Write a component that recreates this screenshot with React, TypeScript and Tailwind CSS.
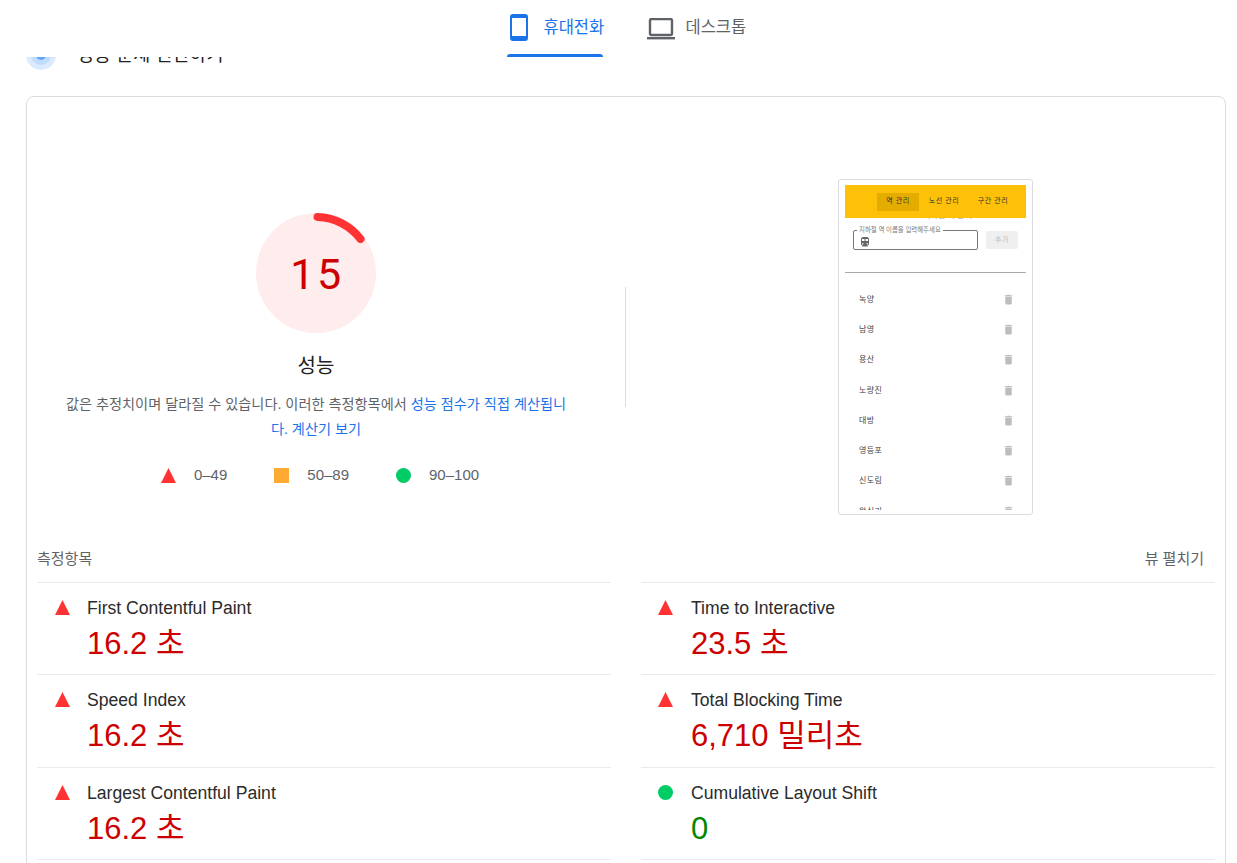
const kr = "font-['Arial','Liberation_Sans','Noto_Sans_CJK_KR',sans-serif]";

const stations = ["녹양", "남영", "용산", "노량진", "대방", "영등포", "신도림", "왕십리"];

function Triangle() {
  return (
    <svg viewBox="0 0 15 15" className="h-[15px] w-[15px]">
      <polygon points="7.5,0 15,15 0,15" fill="#ff3333" />
    </svg>
  );
}

function Metric({ title, value, good, right }: { title: string; value: string; good?: boolean; right?: boolean }) {
  return (
    <div className={`flex h-[92.3px] border-b border-[#e8eaed] pt-[14px] ${right ? "pl-[17px]" : "pl-[18px]"}`}>
      <div className={`pt-[3px] ${right ? "w-[33px]" : "w-[32px]"}`}>
        {good ? <div className="h-[15px] w-[15px] rounded-full bg-[#00cc66]" /> : <Triangle />}
      </div>
      <div>
        <div className="text-[17.6px] leading-[22px] text-[#2b2b2b]">{title}</div>
        <div className={`mt-[5px] text-[31px] leading-[40px] ${good ? "text-[#008800]" : "text-[#cc0000]"}`}>{value}</div>
      </div>
    </div>
  );
}

function Trash() {
  return (
    <svg viewBox="0 0 24 24" className="h-[13px] w-[13px]" fill="#bdbdbd">
      <path d="M6 19c0 1.1.9 2 2 2h8c1.1 0 2-.9 2-2V7H6v12zM19 4h-3.5l-1-1h-5l-1 1H5v2h14V4z" />
    </svg>
  );
}

function PhonePreview() {
  return (
    <div className="ml-[212px] mt-[82px] h-[336px] w-[195px] rounded-[3px] border border-[#dadce0] px-[6px] pt-[5px]">
      <div className="h-[325px] overflow-hidden">
        <div className="flex h-[33px] items-center bg-[#ffc107] pl-[32px] text-[7px] tracking-[0.6px] text-[#333]">
          <div className="flex h-[18px] w-[42px] items-center justify-center rounded-[1px] bg-[#e5ac00]">역 관리</div>
          <div className="flex w-[50px] justify-center whitespace-nowrap">노선 관리</div>
          <div className="flex w-[48px] justify-center whitespace-nowrap">구간 관리</div>
        </div>
        {/* page title hidden behind the yellow bar, only its bottom edge shows */}
        <div className="flex h-[2px] justify-center overflow-hidden pl-[24px] text-[8px] leading-[2px] text-[#999]">
          <span className="-translate-y-[3px]">지하철 역 관리</span>
        </div>
        <div className="flex pl-[8px] pt-[10px]">
          <div className="relative h-[20px] w-[125px] rounded-[2px] border border-[#777]">
            <span className="absolute -top-[5px] left-[3px] whitespace-nowrap bg-white px-[2px] text-[6.4px] leading-[8px] text-[#777]">지하철 역 이름을 입력해주세요</span>
            <svg viewBox="0 0 24 24" className="ml-[5px] mt-[5px] h-[12px] w-[12px]" fill="#666">
              <path d="M12 2c-4 0-8 .5-8 4v9.5C4 17.4 5.6 19 7.5 19L6 20.5v.5h12v-.5L16.500 19c1.900 0 3.500-1.600 3.500-3.500V6c0-3.500-4-4-8-4zM7.500 17a1.500 1.500 0 110-3 1.500 1.500 0 010 3zM11 10H6V6h5v4zm5.500 7a1.500 1.500 0 110-3 1.500 1.500 0 010 3zM18 10h-5V6h5v4z" />
            </svg>
          </div>
          <div className="ml-[8px] mt-[1px] flex h-[18px] w-[32px] items-center justify-center rounded-[2px] bg-[#efefef] text-[7px] tracking-[0.5px] text-[#bbb]">추가</div>
        </div>
        <div className="mt-[22px] h-px bg-[#aaa]" />
        <div className="pt-[11px]">
          {stations.map((name) => (
            <div key={name} className="flex h-[30.3px] items-center justify-between pl-[14px] pr-[11px] text-[8px] tracking-[0.4px] text-[#444]">
              <span className="pt-[1px]">{name}</span>
              <Trash />
            </div>
          ))}
        </div>
      </div>
    </div>
  );
}

function Gauge() {
  return (
    <svg viewBox="0 0 120 120" className="h-[120px] w-[120px]">
      <circle cx="60" cy="60" r="60" fill="#ffecec" />
      <path d="M 61.500 4 A 56 56 0 0 1 104.500 26" fill="none" stroke="#ff3333" strokeWidth="8" strokeLinecap="round" />
      <text x="61" y="76" textAnchor="middle" fontSize="43" letterSpacing="2.500" fill="#cc0000" fontFamily="Roboto, sans-serif">15</text>
    </svg>
  );
}

export default function App() {
  return (
    <div className={`relative h-[863px] w-[1237px] overflow-hidden bg-white ${kr}`}>
      {/* sticky tab bar */}
      <div className="absolute left-0 top-0 z-10 flex h-[57px] w-full justify-center bg-white pl-[16px]">
        <div className="flex h-[57px] w-[96px] flex-col items-center justify-between">
          <div className="flex h-[54px] w-full items-start pl-[1px] pt-[14px]">
            <svg viewBox="0 0 18 27" className="ml-[2px] h-[27px] w-[18px] shrink-0">
              <rect x="1" y="1" width="16" height="25" rx="2" fill="none" stroke="#1a73e8" strokeWidth="2" />
              <rect x="1" y="1" width="16" height="3" fill="#1a73e8" />
              <rect x="1" y="22" width="16" height="4" fill="#1a73e8" />
            </svg>
            <span className="ml-[16px] mt-[2px] whitespace-nowrap text-[16.5px] leading-[22px] text-[#1a73e8]">휴대전화</span>
          </div>
          <div className="h-[3px] w-full rounded-t-[3px] bg-[#1a73e8]" />
        </div>
        <div className="ml-[44px] flex h-[54px] w-[100px] items-start pt-[16px]">
          <svg viewBox="0 0 28 22" className="mt-[2px] h-[22px] w-[28px] shrink-0">
            <rect x="3" y="1" width="22" height="16" rx="1.500" fill="none" stroke="#5f6368" strokeWidth="2.400" />
            <rect x="0" y="19" width="28" height="2.400" fill="#5f6368" />
          </svg>
          <span className="ml-[11px] whitespace-nowrap text-[16.5px] leading-[22px] text-[#5f6368]">데스크톱</span>
        </div>
      </div>

      <div className="px-[26px] pt-[40px]">
        <div className="flex h-[30px] items-center">
          <svg viewBox="0 0 30 30" className="h-[30px] w-[30px]">
            <circle cx="15" cy="15" r="15" fill="#dbeafe" />
            <circle cx="15" cy="15" r="10" fill="#bfdbfe" />
            <circle cx="15" cy="15" r="5" fill="#60a5fa" />
          </svg>
          <span className="ml-[21px] text-[18.5px] text-[#212121]">성능 문제 진단하기</span>
        </div>

        <div className="mt-[26px] w-[1200px] rounded-[8px] border border-[#dadce0] px-[10px] pb-[20px]">
          <div className="-mx-[10px] flex h-[451px]">
            <div className="flex w-[578px] flex-col items-center pt-[116px]">
              <Gauge />
              <div className="mt-[19px] text-[20px] leading-[28px] text-[#212121]">성능</div>
              <p className="mt-[12px] w-[515px] text-center text-[14.2px] leading-[25px] text-[#5f6368]">
                값은 추정치이며 달라질 수 있습니다. 이러한 측정항목에서 <span className="text-[#1a73e8]">성능 점수가 직접 계산됩니다. 계산기 보기</span>
              </p>
              <div className="ml-[8px] mt-[21px] flex items-center text-[15px] leading-[24px] text-[#5f6368]">
                <Triangle />
                <span className="ml-[18px]">0–49</span>
                <div className="ml-[47px] h-[15px] w-[15px] bg-[#ffaa33]" />
                <span className="ml-[18px]">50–89</span>
                <div className="ml-[47px] h-[15px] w-[15px] rounded-full bg-[#00cc66]" />
                <span className="ml-[18px]">90–100</span>
              </div>
            </div>
            <div className="ml-[20px] mt-[190px] h-[120px] w-px bg-[#dadce0]" />
            <PhonePreview />
          </div>

          <div className="grid grid-cols-2 gap-x-[30px]">
            <div>
              <div className="flex h-[35px] items-center border-b border-[#e8eaed] pb-[12px] text-[15px] text-[#5f6368]">측정항목</div>
              <Metric title="First Contentful Paint" value="16.2 초" />
              <Metric title="Speed Index" value="16.2 초" />
              <Metric title="Largest Contentful Paint" value="16.2 초" />
            </div>
            <div>
              <div className="flex h-[35px] items-center justify-end border-b border-[#e8eaed] pb-[12px] pr-[11px] text-[15px] text-[#5f6368]">뷰 펼치기</div>
              <Metric right title="Time to Interactive" value="23.5 초" />
              <Metric right title="Total Blocking Time" value="6,710 밀리초" />
              <Metric right title="Cumulative Layout Shift" value="0" good />
            </div>
          </div>
        </div>
      </div>
    </div>
  );
}
